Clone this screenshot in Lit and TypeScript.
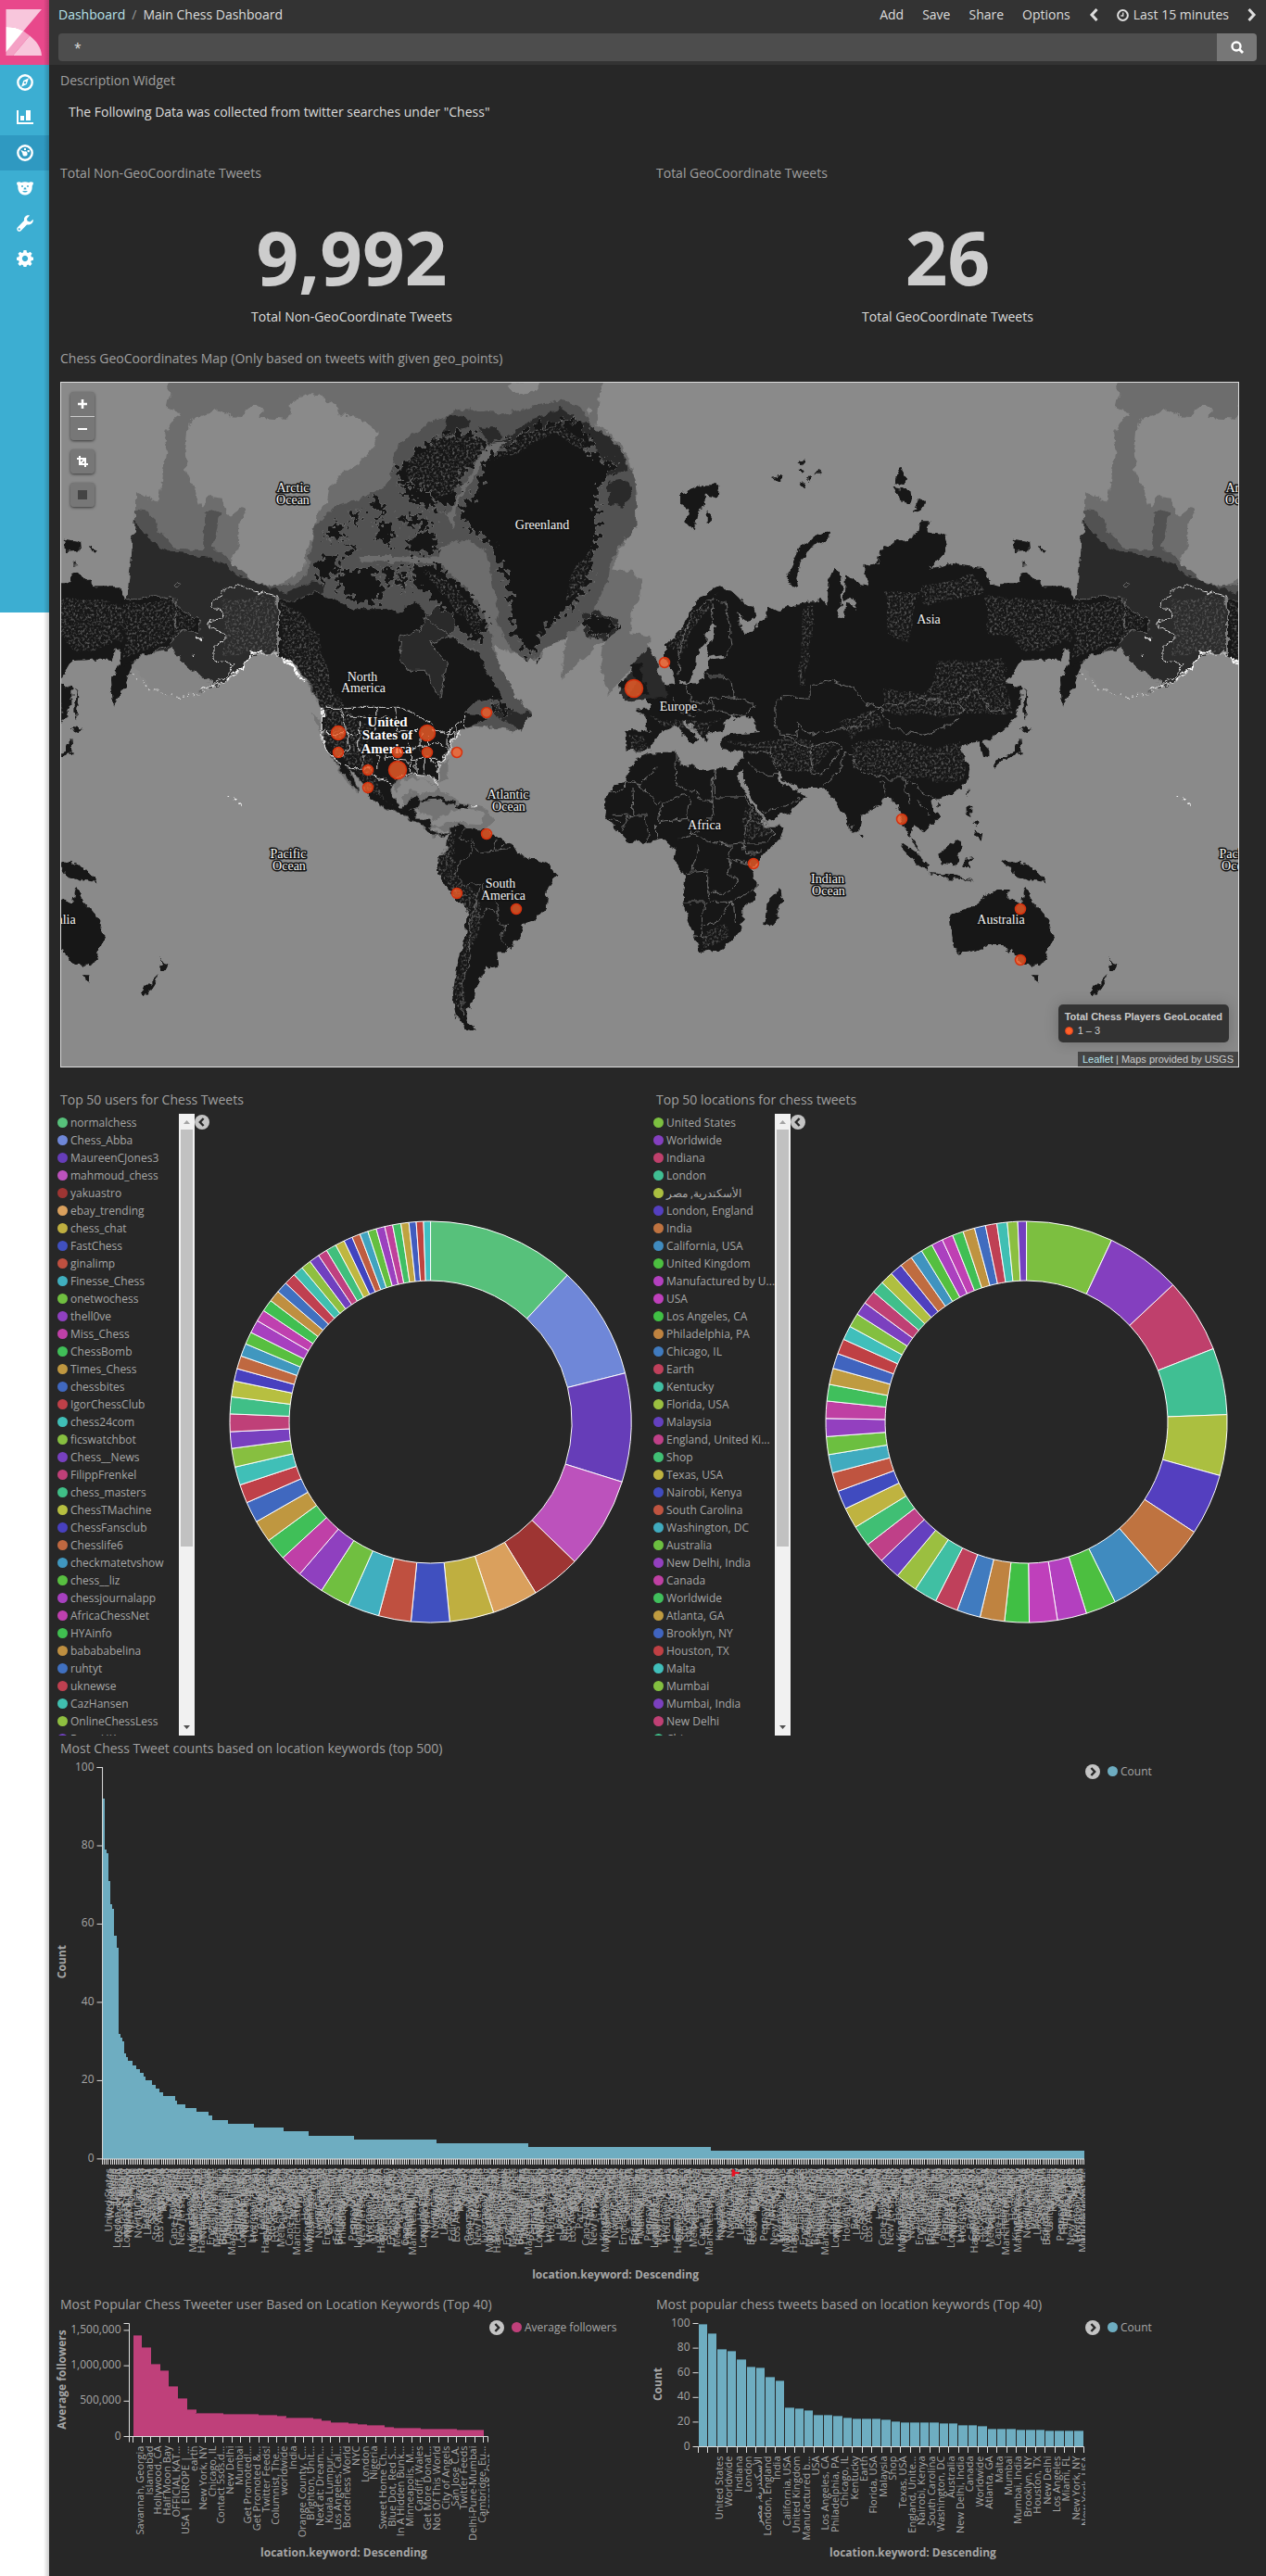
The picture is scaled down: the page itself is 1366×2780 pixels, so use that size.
import { LitElement, html, svg, css } from "lit";
import { customElement, property } from "lit/decorators.js";

/* ---------- data ---------- */

const USERS = ["normalchess", "Chess_Abba", "MaureenCJones3", "mahmoud_chess", "yakuastro", "ebay_trending", "chess_chat", "FastChess", "ginalimp", "Finesse_Chess", "onetwochess", "thell0ve", "Miss_Chess", "ChessBomb", "Times_Chess", "chessbites", "IgorChessClub", "chess24com", "ficswatchbot", "Chess__News", "FilippFrenkel", "chess_masters", "ChessTMachine", "ChessFansclub", "Chesslife6", "checkmatetvshow", "chess__liz", "chessjournalapp", "AfricaChessNet", "HYAinfo", "babababelina", "ruhtyt", "uknewse", "CazHansen", "OnlineChessLess", "RogerHK"];
const USER_COLORS = "57c17b 6f87d8 663db8 bc52bc 9e3533 daa05d bfaf40 4050bf bf5040 40afbf 70bf40 8f40bf bf40a7 40bf58 bf9740 4068bf bf4048 40bfb7 87bf40 7840bf bf4078 40bf87 b7bf40 4840bf bf6840 4097bf 58bf40 a740bf bf40af 40bf50 bf8f40 4070bf bf4050 40bfaf 8fbf40 7040bf bf4080 40bf7c bfb740 4044bf bf5c40 40a3bf 64bf40 9b40bf bf409b 40bf64 bfa340 405cbf bf4440 40bfc3".split(" ");
const USER_ENDS = [43, 75.9, 107.4, 134.1, 148.4, 161.7, 174.5, 185.6, 195, 204.1, 212.9, 220.7, 227.4, 233.8, 240.2, 246.3, 251.7, 257, 262.4, 267.2, 272.3, 277.2, 281.8, 285.4, 289.2, 292.9, 296.5, 300.3, 303.7, 307.2, 310.5, 313.8, 317.2, 320.2, 323.1, 326.1, 328.8, 331.8, 334.5, 337, 339.4, 341.8, 344.3, 346.8, 349.1, 351.5, 353.8, 355.9, 358, 360];

const PLACES = ["United States", "Worldwide", "Indiana", "London", "الأسكندرية, مصر", "London, England", "India", "California, USA", "United Kingdom", "Manufactured by U...", "USA", "Los Angeles, CA", "Philadelphia, PA", "Chicago, IL", "Earth", "Kentucky", "Florida, USA", "Malaysia", "England, United Ki...", "Shop", "Texas, USA", "Nairobi, Kenya", "South Carolina", "Washington, DC", "Australia", "New Delhi, India", "Canada", "Worldwide", "Atlanta, GA", "Brooklyn, NY", "Houston, TX", "Malta", "Mumbai", "Mumbai, India", "New Delhi", "China"];
const PLACE_COLORS = "7cbf40 843fbf bf406c 40bf93 abbf40 543fbf bf7340 408bbf 4cbf40 b340bf bf40bb 40bf44 bf8340 407bbf bf405b 40bfa3 9bbf40 6440bf bf4088 40bf74 bfb340 404bbf bf5440 40abbf 6cbf40 9340bf bf40a3 40bf5c bf9b40 4064bf bf4044 40bfbb 83bf40 7b40bf bf4074 40bf8b b0bf40 4f40bf bf6c40 4093bf 54bf40 ab40bf bf40b3 40bf54 bf9340 406cbf bf4054 40bfb3 8bbf40 7340bf".split(" ");
const PLACE_ENDS = [25.1, 46.9, 68.6, 87.9, 105.5, 123.3, 138.9, 153.8, 162.6, 171.1, 179.2, 186.3, 193.4, 200.2, 206.9, 213.6, 220, 226.3, 232.3, 238.4, 244.4, 249.8, 255.3, 260.6, 265.8, 271, 276, 280.8, 285.5, 289.9, 294.3, 298.4, 302.5, 306.4, 310.4, 314, 317.7, 321.3, 325, 328.5, 331.9, 335.2, 338.4, 341.6, 345, 348.2, 351.5, 354.5, 357.5, 360];

/* [count, number of locations with that count] */
const RUNS: [number, number][] = [[92, 1], [79, 1], [78, 1], [71, 1], [65, 1], [64, 1], [57, 1], [54, 1], [32, 1], [31, 1], [30, 1], [27, 1], [26, 1], [25, 2], [24, 2], [23, 2], [22, 2], [21, 1], [20, 3], [19, 2], [18, 2], [17, 2], [16, 6], [15, 1], [14, 4], [13, 6], [12, 6], [11, 2], [10, 8], [9, 13], [8, 15], [7, 13], [6, 23], [5, 42], [4, 47], [3, 93], [2, 190]];

const TOP40_TWEETS = [100, 92, 79, 78, 71, 65, 64, 57, 54, 32, 31, 30, 26, 26, 25, 24, 23, 23, 23, 22, 21, 20, 20, 20, 20, 19, 19, 18, 18, 17, 15, 15, 15, 14, 14, 14, 13, 13, 13, 13];
const TOP40_TWEET_LABELS = ["United States", "Worldwide", "Indiana", "London", "الأسكندرية, مصر", "London, England", "India", "California, USA", "United Kingdom", "Manufactured b...", "USA", "Los Angeles, CA", "Philadelphia, PA", "Chicago, IL", "Kentucky", "Earth", "Florida, USA", "Malaysia", "Shop", "Texas, USA", "England, Unite...", "Nairobi, Kenya", "South Carolina", "Washington, DC", "Australia", "New Delhi, India", "Canada", "Worldwide", "Atlanta, GA", "Malta", "Mumbai", "Mumbai, India", "Brooklyn, NY", "Houston, TX", "New Delhi", "Los Angeles", "Miami, FL", "New York, NY", "New York, USA"];

/* thousands of followers */
const TOP40_FOLLOWERS = [1435, 1257, 1030, 940, 709, 548, 380, 340, 330, 328, 327, 322, 320, 318, 314, 308, 300, 270, 264, 262, 250, 235, 208, 198, 190, 178, 170, 165, 134, 130, 122, 118, 114, 112, 110, 106, 100, 94, 92];
const TOP40_FOLLOWER_LABELS = ["Savannah, Georgia", "Islamabad", "Hollywood, CA", "Half Moon Bay", "OFFICIAL KAT...", "USA | EUROPE | ...", "earth", "New York, NY", "Chicago, IL", "Contact 5sos.d...", "New Delhi", "Mumbai", "Get Promoted!...", "Get Promoted &...", "Twitter Feeds!", "Columnist, The...", "worldwide", "India", "Orange County, C...", "Brighton, Unit...", "Next at: Dream...", "Kuala Lumpur,...", "Los Angeles, Cal...", "Borderless World", "NYC", "London", "Nigeria", "Sweet Home Ch...", "Blue Dot, Red S...", "In A Hidden Bunk...", "Minneapolis, M...", "Cardiff, Wales", "Get More Donat...", "Not Of This World", "City of Angels", "San Jose C.A.", "Twitter Feeds", "Delhi-Pune-Mumbai", "Cambridge, Eu...", "Toronto, Ont..."];

const CITIES = ["United States", "Worldwide", "Indiana", "London", "London, England", "Los Angeles, CA", "Manufactured b...", "Philadelphia, PA", "Kentucky", "Florida, USA", "England, Unite...", "Nairobi, Kenya", "Malaysia", "Washington, DC", "Mumbai, India", "Brooklyn, NY", "New Delhi", "Miami, FL", "New York, NY", "Reykjavik", "Russia", "Chennai, India", "Lagos, Nigeria", "New Jersey, USA", "Kuala Lumpur", "Toronto", "Canada", "Cambridge, MA", "Manchester, Eng...", "Stockholm", "Dublin", "Melbourne, Vic...", "Oslo", "Torquay", "Hamburg, Germ...", "Pakistan", "Seattle, WA", "Home", "Paris, France", "Virginia, USA", "Alberta", "Barcelona, Sp...", "Calgary", "India", "Liverpool, Eng...", "Madrid", "North Carolina", "Pennsylvania,...", "Santiago", "Berlin", "Edinburgh, Sc...", "Houston, Texas", "Los Santos", "Orlando, FL", "Rhode Island", "Stockton, Cali...", "Hong Kong", "Bangalore, Ind...", "Ghana", "Cape Town, So...", "Dallas, Texas", "Fairfax, Virgi...", "Green Bay", "Kingston, Jam..."];

/* ---------- shared ---------- */

const base = css`
  :host { display: block; font-family: "Open Sans", "Noto Sans", sans-serif; color: #a6a6a6; box-sizing: border-box; }
  *, *::before, *::after { box-sizing: border-box; }
  svg { display: block; }
`;

const toggleIcon = (dir: "left" | "right") => html`
  <svg width="16" height="16" viewBox="0 0 16 16" aria-hidden="true">
    <circle cx="8" cy="8" r="8" fill="#c4c4c4"></circle>
    <path d=${dir === "left" ? "M9.6 4 5.8 8l3.8 4" : "M6.4 4l3.8 4-3.8 4"} fill="none" stroke="#272727" stroke-width="2.4"></path>
  </svg>`;

/* ---------- donut ---------- */

@customElement("donut-chart")
export class DonutChart extends LitElement {
  @property({ attribute: false }) names: string[] = [];
  @property({ attribute: false }) colors: string[] = [];
  @property({ attribute: false }) ends: number[] = [];

  static styles = [base, css`
    :host { display: flex; height: 671px; margin-left: -5px; }
    .names { list-style: none; margin: 0; padding: 0 0 0 2px; width: 133px; overflow: hidden; }
    .name { display: flex; align-items: center; gap: 3px; height: 19px; font-size: 12px; line-height: 19px; white-space: nowrap; }
    .dot { flex: none; width: 11px; height: 11px; border-radius: 50%; }
    .bar { flex: none; width: 17px; background: #f1f1f1; display: flex; flex-direction: column; align-items: center; }
    .arrow { height: 17px; width: 17px; }
    .thumb { width: 13px; height: 450px; background: #c1c1c1; }
    .space { flex: 1; }
    .toggle { flex: none; align-self: flex-start; border: 0; padding: 0; margin: 1px 10px 0 0; background: none; }
    .plot { flex: 1; display: flex; align-items: center; justify-content: center; padding-bottom: 5px; min-width: 0; }
    .ring { width: 95%; max-width: 640px; max-height: 100%; }
  `];

  private slice(from: number, to: number) {
    const pt = (a: number, r: number) => {
      const t = (a * Math.PI) / 180;
      return `${(r * Math.sin(t)).toFixed(2)} ${(-r * Math.cos(t)).toFixed(2)}`;
    };
    return `M${pt(from, 218)}A218 218 0 0 1 ${pt(to, 218)}L${pt(to, 153.5)}A153.5 153.5 0 0 0 ${pt(from, 153.5)}Z`;
  }

  render() {
    return html`
      <ul class="names">
        ${this.names.map((n, i) => html`<li class="name"><span class="dot" style="background:#${this.colors[i]}"></span>${n}</li>`)}
      </ul>
      <div class="bar">
        <svg class="arrow" viewBox="0 0 17 17"><path d="M5 11l3.500-4 3.500 4z" fill="#a3a3a3"></path></svg>
        <div class="thumb"></div>
        <div class="space"></div>
        <svg class="arrow" viewBox="0 0 17 17"><path d="M5 6l3.500 4 3.500-4z" fill="#505050"></path></svg>
      </div>
      <button class="toggle" aria-label="Hide legend">${toggleIcon("left")}</button>
      <div class="plot">
        <svg class="ring" viewBox="-219 -219 438 438">
          ${this.ends.map((e, i) => svg`<path d=${this.slice(i ? this.ends[i - 1] : 0, e)} fill="#${this.colors[i]}" stroke="#fff" stroke-width="1"></path>`)}
        </svg>
      </div>`;
  }
}

/* ---------- bars ---------- */

interface BarSpec {
  width: number;
  height: number;
  left: number;
  right: number;
  top: number;
  bottom: number;
  max: number;
  ticks: [number, string][];
  color: string;
  edge: string;
  yTitle: string;
  yTitleY: number;
  xTitleX: number;
  xTitleY: number;
  first: number;
  pitch: number;
  barWidth: number;
  values: number[];
  labels: string[];
  labelStart: number;
  labelPitch: number;
  tickPitch: number;
  axis: boolean;
  legend: string;
  marker?: number;
}

@customElement("bar-chart")
export class BarChart extends LitElement {
  @property({ attribute: false }) spec!: BarSpec;

  static styles = [base, css`
    :host { display: flex; margin-left: -5px; align-items: flex-start; }
    .plot { flex: 1; min-width: 0; overflow: hidden; }
    .chart { width: 100%; height: auto; }
    .bars { shape-rendering: crispEdges; }
    .tick { font-size: 12px; fill: #a6a6a6; text-anchor: end; }
    .title { font-size: 12px; font-weight: 700; fill: #a6a6a6; text-anchor: middle; }
    .label { font-size: 11px; fill: #a6a6a6; text-anchor: end; }
    .legend { flex: none; width: 166px; display: flex; align-items: center; padding-top: 1px; font-size: 12px; line-height: 17px; }
    .toggle { border: 0; padding: 0; margin: 0 8px 0 0; background: none; }
    .dot { width: 11px; height: 11px; border-radius: 50%; margin-right: 3px; }
  `];

  render() {
    const s = this.spec;
    const y = (v: number) => s.bottom - ((s.bottom - s.top) * v) / s.max;
    const marks: number[] = [];
    for (let x = s.first; x <= s.right; x += s.tickPitch) marks.push(x);
    return html`
      <div class="plot">
        <svg class="chart" viewBox="0 0 ${s.width} ${s.height}">
          <g class="bars">
            ${s.values.map((v, i) => svg`<rect x=${s.first + i * s.pitch} y=${y(v)} width=${s.barWidth} height=${s.bottom - y(v)} fill=${s.color}></rect>`)}
            <path d=${s.values.map((v, i) => `M${s.first + i * s.pitch} ${y(v) + 0.5}h${s.barWidth}`).join("")} stroke=${s.edge} fill="none"></path>
          </g>
          ${s.ticks.map(([v, t]) => svg`
            <path d="M${s.left - 6} ${y(v)}H${s.left}" stroke="#ddd"></path>
            <text class="tick" x=${s.left - 9} y=${y(v) + 3}>${t}</text>`)}
          ${s.axis ? svg`<path d="M${s.left - 6} ${s.top}H${s.left}V${s.bottom}" stroke="#ddd" fill="none"></path>` : ""}
          <path d="M${s.left} ${s.bottom + 6}V${s.bottom}H${s.right}V${s.bottom + 6}" stroke="#ddd" fill="none"></path>
          <path class="bars" d=${marks.map((x) => `M${x} ${s.bottom}v6`).join("")} stroke="#ddd"></path>
          ${s.labels.map((t, i) => {
            const x = s.labelStart + i * s.labelPitch;
            return svg`<text class="label" direction="ltr" transform="translate(${x} ${s.bottom + 10}) rotate(-90)">${t}</text>`;
          })}
          ${s.marker ? svg`<path d="M${s.marker - 2} ${s.bottom + 11}a4 4 0 0 1 0 8zm4 3h4v2h-4z" fill="#e81123"></path>` : ""}
          <text class="title" transform="translate(11 ${s.yTitleY}) rotate(-90)">${s.yTitle}</text>
          <text class="title" x=${s.xTitleX} y=${s.xTitleY}>location.keyword: Descending</text>
        </svg>
      </div>
      <div class="legend">
        <button class="toggle" aria-label="Hide legend">${toggleIcon("right")}</button>
        <span class="dot" style="background:${s.color}"></span>${s.legend}
      </div>`;
  }
}

const COUNT_TICKS: [number, string][] = [0, 20, 40, 60, 80, 100].map((v) => [v, String(v)]);

const ALL_BARS: BarSpec = {
  width: 1110, height: 568, left: 50.5, right: 1108.5, top: 5.5, bottom: 427.5, max: 100,
  ticks: COUNT_TICKS, color: "#6eadc1", edge: "#6eadc1", yTitle: "Count", yTitleY: 215,
  xTitleX: 603.5, xTitleY: 557, first: 50.5, pitch: 2.116, barWidth: 2.3,
  values: RUNS.flatMap(([v, n]) => Array(n).fill(v)),
  labels: Array.from({ length: 498 }, (_, i) => (i < 6 ? CITIES[i] : CITIES[(i * 7 + (i >> 3) * 5) % CITIES.length])),
  labelStart: 61, labelPitch: 2.116, tickPitch: 2.116, axis: true, legend: "Count", marker: 731,
};

const FOLLOWER_BARS: BarSpec = {
  width: 468, height: 268, left: 79.5, right: 466.5, top: 5.5, bottom: 127.5, max: 1597,
  ticks: [[0, "0"], [500, "500,000"], [1000, "1,000,000"], [1500, "1,500,000"]],
  color: "#bf407a", edge: "#84345a", yTitle: "Average followers", yTitleY: 66,
  xTitleX: 311, xTitleY: 257, first: 83.5, pitch: 9.7, barWidth: 9.8,
  values: TOP40_FOLLOWERS, labels: TOP40_FOLLOWER_LABELS, labelStart: 95, labelPitch: 9.7,
  tickPitch: 9.7, axis: true, legend: "Average followers",
};

const TWEET_BARS: BarSpec = {
  width: 468, height: 268, left: 50.5, right: 466.5, top: 5.5, bottom: 138.5, max: 100,
  ticks: COUNT_TICKS, color: "#6eadc1", edge: "#4f7a88", yTitle: "Count", yTitleY: 71,
  xTitleX: 282, xTitleY: 257, first: 50.5, pitch: 10.4, barWidth: 9.4,
  values: TOP40_TWEETS, labels: TOP40_TWEET_LABELS, labelStart: 77, labelPitch: 10.4,
  tickPitch: 10.4, axis: false, legend: "Count",
};

/* ---------- map ---------- */

/* Each hemisphere has its own drawing grid, which these matrices bring to map units. */
const WEST = "matrix(.42091 0 0 .33333 -16 -13)";
const EAST = "matrix(.42474 0 0 .33333 634 -13)";

const SHALLOW = "M310 37 315 80 308 120 345 140 320 165 300 225 310 260 300 330 288 425 255 410 228 395V600L470 660 700 720 1150 940 1200 1060 1240 1115 1215 1165 1180 1120 1150 890 1220 930 1260 940 1290 880 1335 850 1320 1000 1380 930 1430 870 1420 960 1440 1050 1500 960 1545 890 1545 860 1500 850 1500 780 1520 740 1525 680 1500 650 1455 650 1460 600 1510 500 1515 400 1500 300 1470 240 1440 200 1410 180 1415 90 1440 0H310Z";
const BASIN = "M360 180 390 150 450 125 480 160 530 110 555 120 550 150 620 155 625 110 670 70 715 90 745 110 750 145 800 150 850 200 840 240 800 300 750 340 725 380 720 420 690 470 685 520 665 590 660 640 620 680 580 695 530 680 470 620 490 580 495 500 512 450 500 445 470 470 450 410 420 405 395 450 380 380 360 330 355 250ZM1185 50 1210 80 1260 60 1265 37H1190ZM1390 115 1400 130 1392 150 1385 130Z";
const SLOPE = "M228 450 265 460 290 520 330 575 400 580 410 470 405 460 430 452 445 460 435 510 425 575 450 590 490 640 540 680 580 700 640 690 668 660 680 560 690 500 740 440 800 420 870 370 890 310 900 240 960 190 1000 160 1060 125 1120 130 1180 140 1250 115 1320 95 1370 120 1400 190 1440 210 1480 270 1510 350 1515 500 1450 600 1440 680 1400 790 1330 860 1270 910 1235 945 1190 900 1150 800 1140 900 1200 1050 1245 1110 1200 1165 1090 1150 600 760 228 700Z";
const DEEP = "M228 485 245 520 290 570 330 590 400 600 450 620 490 665 570 700 610 722 680 685 710 690 700 800 500 950 440 1020 400 1040 330 1000 230 930 205 755ZM1100 260 1180 220 1250 155 1320 120 1390 180 1440 210 1480 270 1495 330 1440 340 1400 220ZM1030 150 1060 145 1090 160 1075 190 1040 200 1015 230ZM1105 180 1150 185 1168 210 1140 240ZM1375 790 1410 775 1460 800 1465 840 1430 870 1385 860ZM1440 360 1490 350 1500 400 1480 440 1440 430ZM1470 1045 1500 960 1545 890 1595 1052 1490 1070ZM1150 1075 1200 1105 1245 1110 1215 1160 1150 1120Z";
const BERING = "M220 950 240 925 275 912 320 900 350 945 390 985 425 1010 420 1035 330 1055 270 1035Z";
const BAFFIN_BAY = "M1010 570 1070 545 1130 590 1145 700 1160 790 1145 860 1120 790 1090 720 1040 660 1000 610ZM800 600 900 600 1010 605 1000 625 880 620 800 615ZM1130 240 1180 230 1120 300 1050 440 1045 520 1028 470 1060 390Z";

const CHUKOTKA = "M195 755 210 735 240 740 265 725 320 740 345 770 395 810 390 845 345 835 325 880 270 915 220 940 195 960Z";
const ALASKA = "M490 692 530 710 594 730V915L560 915 530 920 505 955 480 990 440 1015 400 1035 440 1008 470 975 480 950 445 945 430 930 430 895 460 865 455 850 415 830 420 810 455 800 445 770 425 765 430 735 455 715Z";
const MAINLAND = "M592 730 625 750 650 735 690 715 720 735 760 750 790 770 870 770 905 785 925 760 945 745 965 770 1000 850 1050 870 1090 900 1115 920 1130 970 1160 1030 1170 1060 1100 1075 1072 1110 1110 1115 1140 1125 1100 1145 1060 1170 1040 1200 1030 1230 1005 1270 1005 1340 985 1310 940 1305 895 1325 888 1355 890 1390 915 1415 945 1378 957 1385 945 1430 950 1450 985 1455 985 1490 1010 1505 1035 1485 1020 1508 985 1505 960 1470 900 1430 850 1405 825 1375 805 1325 775 1280 803 1368 750 1290 735 1260 712 1210 705 1140 707 1095 670 1010 640 950 592 920Z";
const SOUTH_AMERICA = "M1035 1485 1060 1465 1075 1480 1130 1485 1150 1510 1190 1530 1205 1560 1235 1580 1290 1600 1310 1630 1285 1680 1280 1740 1250 1780 1220 1795 1215 1830 1180 1885 1155 1885 1160 1925 1125 1935 1120 1960 1105 1970 1100 2030 1080 2070 1080 2110 1105 2135 1075 2130 1050 2090 1040 2020 1055 1920 1075 1820 1078 1740 1040 1700 1000 1615 1005 1580 1025 1550 1030 1510Z";
const GREENLAND = "M1110 300 1150 270 1200 220 1250 180 1310 160 1360 165 1390 210 1400 240 1385 270 1420 280 1460 300 1440 340 1415 380 1410 470 1415 520 1400 600 1390 700 1350 760 1300 810 1270 850 1250 930 1225 905 1200 850 1190 780 1185 700 1160 620 1140 560 1100 530 1060 470 1065 440 1100 400 1115 340Z";
const ARCTIC_ISLES = "M925 290 960 250 1010 210 1060 200 1110 210 1130 240 1100 290 1060 350 1050 420 1020 440 990 400 940 370 895 350 905 310ZM900 365 940 375 985 400 1010 450 960 440 920 400ZM830 410 870 430 865 470 835 445ZM780 450 808 450 800 505 778 490ZM725 510 760 495 755 545 712 540ZM840 490 888 500 880 570 850 545ZM930 540 980 515 1010 570 985 592 928 590ZM755 560 800 565 790 595ZM900 470 950 470 990 490 980 510 920 500ZM700 600 755 605 750 655 700 685 690 640ZM745 665 790 640 840 640 850 680 870 705 850 755 790 745 755 715ZM860 630 893 640 893 690 870 685ZM900 640 925 645 918 710 900 700ZM940 620 1000 630 1040 670 1080 720 1110 770 1130 820 1115 880 1060 850 1040 790 990 740 960 710 938 680ZM1375 800 1400 795 1440 800 1460 825 1430 860 1395 850ZM1150 1075 1175 1080 1190 1110 1155 1105Z";
const CARIBBEAN = "M955 1385 1000 1378 1050 1402 1035 1406 1000 1388 960 1392ZM1055 1402 1090 1410 1085 1418 1055 1414ZM1495 955 1522 950 1530 1000 1545 1045 1492 1055 1515 1010ZM1475 1000 1495 1005 1490 1035 1468 1030Z";
const HUDSON = "M910 860 960 840 970 800 1010 760 1050 780 1050 830 1020 870 985 880 1025 950 1010 1060 985 1010 975 970 925 970 905 920Z";

const AFRICA = "M-34 1260-59 1325-103 1355-108 1400-113 1440-83 1485-49 1530 0 1525 30 1515 50 1530 70 1545 65 1580 85 1620 95 1650 85 1720 105 1790 130 1885 180 1875 215 1840 240 1790 238 1745 270 1715 272 1660 262 1610 300 1550 330 1510 343 1475 295 1475 270 1420 245 1370 222 1305 240 1290 240 1250 215 1290 175 1288 140 1297 110 1280 75 1270 70 1235 35 1235 0 1240-20 1250Z";
const EURASIA = "M0 1095 0 1060 20 1045 40 1020 65 1015 60 975 80 980 75 1010 100 1015 60 975 40 930 40 890 80 840 105 780 130 730 180 700 205 710 230 740 270 770 275 800 250 810 218 790 235 820 245 855 270 830 300 800 300 760 330 780 365 760 400 750 440 745 455 765 455 690 470 645 487 650 490 740 480 800 495 800 500 755 520 760 530 780 520 740 495 745 500 660 530 690 555 700 545 660 545 630 580 625 585 590 630 550 665 545 685 520 690 490 712 490 705 520 755 530 760 570 745 600 710 645 760 625 800 630 850 640 865 690 890 700 895 685 940 685 945 655 975 665 1005 700 1065 700 1085 750 1125 735 1125 920 1100 950 1085 1010 1050 1085 1045 1000 1070 930 1060 895 1045 935 1000 935 945 940 910 1015 945 1020 945 1080 920 1140 890 1175 850 1195 865 1230 865 1255 850 1250 840 1200 800 1210 795 1225 800 1255 815 1290 810 1330 780 1365 740 1385 720 1390 735 1450 700 1495 670 1470 665 1510 695 1560 680 1545 650 1480 635 1430 620 1380 600 1380 590 1400 540 1445 535 1490 522 1500 490 1420 470 1385 440 1350 380 1350 370 1375 330 1310 335 1330 375 1365 400 1378 360 1425 295 1460 285 1430 240 1340 240 1230 185 1225 180 1195 200 1180 285 1170 270 1145 265 1120 240 1120 220 1130 205 1110 190 1150 185 1170 150 1175 140 1200 125 1170 95 1130 90 1140 125 1200 110 1210 70 1150 40 1165 10 1190 6 1230-10 1232-55 1230-58 1160-5 1165-5 1120-30 1100Z";
const EAST_ISLES = "M333 1680 337 1720 318 1795 295 1795 300 1720ZM460 515 455 545 410 570 385 620 375 680 380 705 355 690 350 670 370 610 385 570 420 540ZM80 400 110 385 130 370 180 370 175 410 140 400 145 440 125 450 115 520 95 490 100 450 80 430ZM150 450 165 480 150 495ZM310 345 335 338 335 360ZM400 345 418 342 410 358ZM422 335 438 322 436 335ZM380 300 395 290 388 310ZM375 320 388 322 385 335ZM380 365 395 360 390 378ZM640 315 657 350 650 372 625 370ZM620 380 665 390 668 430 640 420ZM690 412 706 440 672 466ZM925 545 950 550 968 555 970 580 930 585ZM985 572 1010 580 1000 587ZM945 620 962 630 950 632ZM955 1030 962 1080 958 1140 952 1100ZM945 1155 975 1160 955 1175ZM945 1190 948 1240 905 1258 878 1290 880 1262 930 1235ZM812 1350 816 1362 810 1378ZM811 1410 820 1415 820 1450 812 1440ZM825 1490 846 1495 842 1520 830 1505ZM825 1460 840 1465 832 1480ZM735 1565 785 1518 797 1540 780 1600 740 1595ZM640 1525 680 1560 712 1600 708 1620 690 1610 655 1560ZM712 1625 760 1632 830 1650 760 1645ZM800 1580 825 1575 812 1592 822 1610 802 1612ZM890 1585 940 1590 980 1615 1010 1660 970 1650 930 1635 912 1605ZM538 1495 548 1500 545 1520ZM735 1400 742 1405 736 1412ZM765 1770 770 1760 830 1735 850 1705 885 1680 915 1680 912 1705 945 1725 955 1670 975 1720 1010 1770 1030 1830 1005 1910 985 1925 955 1925 935 1900 925 1875 915 1885 900 1860 860 1860 825 1880 785 1890 775 1870 768 1810ZM972 1957 995 1957 985 1985ZM1165 1895 1180 1920 1195 1925 1175 1948 1165 1930 1175 1920ZM1165 1955 1150 1990 1132 2022 1120 2015 1150 1975Z";
const BALTIC = "M165 820 145 850 145 880 120 920 118 960 100 1015 125 1010 150 975 150 935 195 925 190 915 145 925 150 890 172 830Z";

/* Mountain country, where the relief shows. */
const WEST_RELIEF = "M195 760 320 745 385 820 325 870 195 930ZM598 740 700 850 725 1000 760 1090 830 1150 840 1290 870 1400 960 1460 900 1420 830 1370 780 1280 715 1200 710 1100 610 915ZM1040 1480 1055 1560 1050 1640 1100 1700 1115 1780 1085 1900 1065 2100 1045 2050 1078 1820 1075 1740 1010 1620 1010 1570ZM930 280 1010 215 1120 215 1090 290 1050 400 1010 420 920 345ZM960 640 1040 690 1110 800 1100 860 1060 800ZM450 740 590 740 590 900 460 920ZM1190 230 1310 165 1390 220 1380 260 1300 200 1150 300ZM1360 620 1400 560 1385 700 1340 760Z";
const EAST_RELIEF = "M850 730 1000 740 1120 745 1115 900 1060 880 960 920 920 860 860 850ZM600 715 690 720 660 880 610 860ZM740 940 900 930 910 1010 920 1110 600 1110 595 1030 700 1050ZM510 1200 800 1210 800 1330 650 1320 520 1290ZM190 1190 340 1190 470 1210 430 1310 330 1290 280 1220ZM480 1130 570 1090 600 1150 510 1190ZM45 900 110 790 180 720 110 830 80 930ZM240 1420 290 1440 320 1490 250 1520ZM690 690 830 660 860 720 700 760ZM0 1120 70 1130 150 1140 190 1120 130 1180ZM-50 1170-8 1175 0 1220-50 1220ZM390 780 420 760 400 1020 385 1020ZM125 1820 200 1790 205 1840 135 1880Z";

const WEST_BORDERS = "M331 740V840M1075 1480 1060 1510 1085 1530 1090 1560 1060 1585 1050 1635 1075 1670 1115 1660 1125 1700 1155 1720 1160 1750 1125 1740 1120 1770 1090 1770 1110 1670M1155 1750 1160 1790 1180 1800 1165 1840 1185 1870M1085 1770 1085 1900 1065 1990 1068 2090M1085 1520 1110 1560 1145 1555 1150 1520M1150 1555 1190 1550M1170 1530V1555M1015 1570 1050 1590M955 1420 930 1420";
const EAST_BORDERS = "M75 985 85 870 110 790 155 740 195 745 205 850 210 900 195 925M160 760 165 820M320 1130 320 1075 345 1055 410 1060 410 1020 465 1005 520 1030 550 1075 585 1085 530 1150 400 1180 375 1135 380 1180 330 1180 320 1130M585 1085 650 1080 680 1060 780 1080 800 1100 770 1145 700 1180 620 1160 585 1085M780 1080 830 1030 870 1100 905 1105M340 1180 400 1220 470 1200 490 1220 440 1310 415 1310 410 1220M440 1345 480 1300 500 1230 540 1300 600 1320 650 1320 660 1400M590 1330 600 1375M245 1240 280 1230 310 1240 335 1310 290 1310 250 1260M290 1430 340 1415 385 1385M410 1060M100 1015 105 1070 150 1080 160 1060 215 1055 210 1010 190 990 150 990M160 1060 165 1100 240 1120 270 1080 215 1055M100 1100 165 1100M60 1060 75 1100 120 1120M-60 1325-30 1340 20 1290M68 1235 70 1340 160 1400 165 1290M168 1290V1380H245M30 1405 90 1370 105 1385 100 1450 25 1460 30 1405-40 1325M100 1450 105 1500 185 1535 240 1530 260 1430 245 1380M160 1400 165 1440 110 1500 75 1520M185 1535 210 1540 200 1630 230 1650 200 1690 150 1690 150 1620 95 1625M125 1540 110 1620M85 1722H145M140 1725 135 1830 110 1825M140 1800 180 1780 210 1720 265 1680M150 1690 155 1720 215 1720 220 1790M200 1580 260 1600M240 1530 245 1565 285 1560M280 1460 325 1500 300 1530 245 1530M-70 1490-50 1440-10 1440 0 1525M20 1470V1520M-100 1450-70 1460M655 1330 690 1360 720 1385M680 1390 715 1440M-60 1325V1350M-40 1350-38 1438H-90M-105 1360H-62M-10 1165 5 1170";
const STATES = "M718 1090H905L940 1110 985 1140 1000 1175 1030 1165 1045 1150 1062 1135M707 1175H800M752 1090 765 1150V1175M765 1120H840M843 1090V1180M843 1125H895M800 1140V1230M775 1175V1230L745 1250M800 1230H940M810 1230V1285M850 1230V1290M765 1275 800 1290 830 1290 845 1325 870 1320 888 1345M870 1230V1255L935 1265M935 1230V1300M948 1255V1300M970 1255V1300M985 1255 1000 1300M935 1255H1005M925 1170 935 1230 1005 1200 1035 1240M895 1090 900 1170 950 1165M1005 1175H1045V1210M960 1175V1225M980 1180V1215M1050 1150V1180M1070 1120 1075 1160M1030 1160 1028 1240M893 1320 930 1305 985 1310 1003 1350";

const LABELS_WEST: [string, number, number][] = [["Arctic", 250, 118], ["Ocean", 250, 131], ["Greenland", 519, 158], ["North", 325, 322], ["America", 326, 334], ["Atlantic", 482, 449], ["Ocean", 483, 462], ["Pacific", 245, 513], ["Ocean", 246, 526], ["South", 474, 545], ["America", 477, 558]];
const LABELS_EAST: [string, number, number][] = [["Europe", 666, 354], ["Asia", 936, 260], ["Africa", 694, 482], ["Indian", 827, 540], ["Ocean", 828, 553], ["Australia", 1014, 584]];
const COUNTRY_LABEL: [string, number, number][] = [["United", 352, 371], ["States of", 352, 385], ["America", 351, 400]];

const HITS: [number, number, number][] = [[618, 330, 10], [459, 356, 6], [299, 378, 8], [395, 378, 9], [651, 302, 6], [299, 399, 6], [331, 418, 6], [331, 437, 6], [363, 399, 6], [363, 418, 10], [395, 399, 6], [427, 399, 6], [459, 487, 6], [427, 551, 6], [491, 568, 6], [907, 471, 6], [747, 519, 6], [1035, 568, 6], [1035, 623, 6]];

@customElement("tweet-map")
export class TweetMap extends LitElement {
  static styles = [base, css`
    :host { position: relative; margin-top: 13px; height: 740px; border: 1px solid #ddd; overflow: hidden; background: #8a8a8a; }
    .world { width: 100%; height: 100%; }
    .thin path { vector-effect: non-scaling-stroke; }
    .name { font: 14px "Liberation Serif", serif; fill: #f2f2f2; stroke: #111; stroke-width: 3px; stroke-linejoin: round; paint-order: stroke; text-anchor: middle; }
    .country { font: bold 15px "Liberation Serif", serif; fill: #fff; stroke: #111; stroke-width: 3px; paint-order: stroke; text-anchor: middle; }
    .tools { position: absolute; left: 10px; top: 10px; display: flex; flex-direction: column; gap: 10px; }
    .group { border-radius: 4px; overflow: hidden; box-shadow: 0 1px 3px #0009; background: #777; display: flex; flex-direction: column; }
    .tool { width: 26px; height: 26px; padding: 0; border: 0; background: #777; display: flex; align-items: center; justify-content: center; }
    .tool + .tool { border-top: 1px solid #ccc; }
    .key { position: absolute; right: 10px; bottom: 26px; padding: 6px 7px; border-radius: 5px; background: #333; box-shadow: 0 0 15px #0003; color: #ccc; font: 12px/14px "Liberation Sans", Arial, sans-serif; }
    .key b { display: block; font-size: 11px; }
    .range { display: flex; align-items: center; gap: 5px; font-size: 11px; margin-top: 1px; }
    .spot { width: 9px; height: 9px; border-radius: 50%; background: #ff6128; border: 1px solid #d8401f; }
    .credit { position: absolute; right: 0; bottom: 0; padding: 0 5px; background: #333c; color: #ccc; font: 11px/16px "Liberation Sans", Arial, sans-serif; }
    .credit a { color: #b7e2ea; text-decoration: none; }
  `];

  private west() {
    return svg`
      <g id="west">
        <g filter="url(#rough)"><g transform=${WEST}>
          <path fill="#6d6d6d" d=${SHALLOW}></path>
          <path fill="#525252" d=${SLOPE}></path>
          <path fill="#8a8a8a" d=${BASIN}></path>
          <path fill="#2a2a2a" d=${DEEP}></path>
          <path fill="#858585" d=${BERING}></path>
          <path fill="#6d6d6d" d=${BAFFIN_BAY}></path>
          <path fill="#747474" d="M890 1330 930 1300 1005 1350 1060 1400 1130 1415 1148 1460 1130 1485 1040 1490 985 1480 990 1440 920 1415ZM1008 1270 1030 1260 1030 1320 1010 1340ZM700 1130 680 1100 715 1220 760 1320 800 1370 770 1260Z"></path>
          <path fill="#8a8a8a" d="M905 1330 960 1320 1000 1350 960 1375 930 1360 900 1395ZM1010 1440 1080 1415 1125 1430 1115 1465 1050 1460 1000 1475 985 1460Z"></path>
        </g></g>
        <g filter="url(#rough)"><g transform=${WEST} class="thin">
          <path fill="#171717" stroke="#5a5a5a" stroke-width="1" d=${MAINLAND}></path>
          <path fill="#171717" d="${CHUKOTKA}${SOUTH_AMERICA}${CARIBBEAN}"></path>
          <path fill="none" stroke="#6a6a6a" d="M205 740 240 740 265 725 320 740 345 770 395 810 390 845 345 835 325 880 270 915 220 940"></path>
          <path fill="#2c2c2c" stroke="#f0f0f0" stroke-width=".9" d=${ALASKA}></path>
          <path fill="#2a2a2a" stroke="#6a6a6a" d=${HUDSON}></path>
          <path fill="none" stroke="#6a6a6a" d="M965 800 1010 840 1060 880 1110 915M325 690 335 682 345 692 335 702Z"></path>
        </g></g>
        <g filter="url(#fjords)"><g transform=${WEST} class="thin">
          <path fill="#161616" stroke="#747474" stroke-width=".9" d="${GREENLAND}${ARCTIC_ISLES}"></path>
        </g></g>
        <g filter="url(#relief)"><g transform=${WEST}><path d=${WEST_RELIEF}></path></g></g>
        <g filter="url(#rough)"><g transform=${WEST} class="thin" fill="none">
          <path stroke="#7a7a7a" stroke-width=".8" d=${WEST_BORDERS}></path>
          <path stroke="#dcdcdc" stroke-width="1" d=${STATES}></path>
          <path stroke="#e8e8e8" stroke-width="1.200" d="M707 1095 705 1180 720 1230 750 1275M1062 1170 1040 1200 1030 1240 1005 1270 1005 1340"></path>
          <path stroke="#fff" stroke-width="1.800" stroke-dasharray="5 1" d="M605 925 625 945 645 980 660 1010M612 940 632 960 650 1000M505 965 525 915 550 910M460 1000 490 970 510 950"></path>
          <path stroke="#d8d8d8" stroke-width="1.100" stroke-dasharray="2 4" d="M220 985 270 1035 340 1055 400 1045 435 1020"></path>
          <path stroke="#f0f0f0" stroke-width="1.600" d="M385 862 400 872M378 920 380 924M465 1380 468 1382M480 1386 486 1390M493 1400 498 1406M1094 1412H1102"></path>
        </g></g>
        ${LABELS_WEST.map(([t, x, y]) => svg`<text class="name" x=${x} y=${y}>${t}</text>`)}
      </g>`;
  }

  private east() {
    return svg`
      <g id="east">
        <g filter="url(#rough)"><g transform=${EAST}>
          <path fill="#171717" d="${EURASIA}${AFRICA}${EAST_ISLES}"></path>
          <path fill="#8a8a8a" d=${BALTIC}></path>
          <path fill="none" stroke="#8a8a8a" stroke-width="10" d="M226 1310 262 1395 292 1460M328 1305 345 1335 378 1352"></path>
        </g></g>
        <g filter="url(#relief)"><g transform=${EAST}><path d=${EAST_RELIEF}></path></g></g>
        <g filter="url(#rough)"><g transform=${EAST} class="thin">
          <path fill="none" stroke="#7c7c7c" stroke-width=".9" d=${EAST_BORDERS}></path>
        </g></g>
        ${LABELS_EAST.map(([t, x, y]) => svg`<text class="name" x=${x} y=${y}>${t}</text>`)}
      </g>`;
  }

  render() {
    return html`
      <svg class="world" viewBox="0 0 1270 738" preserveAspectRatio="xMidYMid slice" role="img" aria-label="World map of tweets">
        <defs>
          <filter id="rough" color-interpolation-filters="sRGB">
            <feTurbulence type="fractalNoise" baseFrequency=".11" numOctaves="3" seed="4" result="w"></feTurbulence>
            <feDisplacementMap in="SourceGraphic" in2="w" scale="9" xChannelSelector="R" yChannelSelector="G"></feDisplacementMap>
          </filter>
          <filter id="fjords" color-interpolation-filters="sRGB">
            <feTurbulence type="fractalNoise" baseFrequency=".16" numOctaves="2" seed="7" result="w"></feTurbulence>
            <feDisplacementMap in="SourceGraphic" in2="w" scale="26" xChannelSelector="R" yChannelSelector="G"></feDisplacementMap>
          </filter>
          <filter id="relief" color-interpolation-filters="sRGB">
            <feTurbulence type="fractalNoise" baseFrequency=".03" numOctaves="2" seed="2" result="w"></feTurbulence>
            <feDisplacementMap in="SourceGraphic" in2="w" scale="16" xChannelSelector="R" yChannelSelector="G" result="area"></feDisplacementMap>
            <feTurbulence type="fractalNoise" baseFrequency=".4" numOctaves="2" seed="9" result="n"></feTurbulence>
            <feColorMatrix in="n" values="0 0 0 0 .36  0 0 0 0 .36  0 0 0 0 .36  3 0 0 0 -1.4" result="bumps"></feColorMatrix>
            <feComposite in="bumps" in2="area" operator="in"></feComposite>
          </filter>
        </defs>
        ${this.east()}
        <use href="#east" x="-1024"></use>
        ${this.west()}
        <use href="#west" x="1024"></use>
        ${COUNTRY_LABEL.map(([t, x, y]) => svg`<text class="country" x=${x} y=${y}>${t}</text>`)}
        ${HITS.map(([x, y, r]) => svg`<circle cx=${x} cy=${y} r=${r - 0.5} fill="#ff6128" fill-opacity=".75" stroke="#d6310e" stroke-width="1.500"></circle>`)}
      </svg>
      <div class="tools">
        <div class="group">
          <button class="tool" aria-label="Zoom in"><svg width="12" height="12" viewBox="0 0 12 12"><path d="M6 1v10M1 6h10" stroke="#fff" stroke-width="2.600"></path></svg></button>
          <button class="tool" aria-label="Zoom out"><svg width="12" height="12" viewBox="0 0 12 12"><path d="M1 6h10" stroke="#fff" stroke-width="2.200"></path></svg></button>
        </div>
        <div class="group"><button class="tool" aria-label="Crop"><svg width="14" height="14" viewBox="0 0 14 14"><path d="M4 1v9h9M1 4h9v9M4 10l6-6" fill="none" stroke="#fff" stroke-width="2"></path></svg></button></div>
        <div class="group"><button class="tool" aria-label="Draw rectangle"><svg width="10" height="10" viewBox="0 0 10 10"><path d="M0 0h10v10H0z" fill="#444"></path></svg></button></div>
      </div>
      <div class="key"><b>Total Chess Players GeoLocated</b><div class="range"><span class="spot"></span>1 – 3</div></div>
      <div class="credit"><a href="#leaflet">Leaflet</a> | Maps provided by USGS</div>`;
  }
}

/* ---------- sidebar icons ---------- */

const NAV: [string, unknown][] = [
  ["Discover", svg`<circle cx="9" cy="9" r="7.700" fill="none" stroke="#fff" stroke-width="2.400"></circle><path fill="#fff" fill-rule="evenodd" d="M13 4.200 10.700 11 5 13.800 7.300 7zM9 7.900a1.200 1.200 0 1 0 .01 0z"></path>`],
  ["Visualize", svg`<path fill="#fff" d="M0 1h2v13h16v2H0zM4 7h4v5H4zM10 1h5v11h-5z"></path>`],
  ["Dashboard", svg`<circle cx="9" cy="9" r="7.700" fill="none" stroke="#fff" stroke-width="2.400"></circle><path fill="#fff" d="M4.300 5.800 8.300 7.500a2.600 2.600 0 1 1-1.900 2.300zM8 4h2v2H8zM11.600 6h2.200v2.200h-2.200z"></path>`],
  ["Timelion", svg`<path fill="#fff" fill-rule="evenodd" d="M0 3c2-1.300 3.500-1 5 0 2.500-.9 5.500-.9 8 0 1.500-1 3-1.300 5 0-.2 2-.6 3-1.300 3.600.3 5-1.700 9.900-7.700 9.900S1 11.600 1.300 6.600C.6 6 .2 5 0 3zm5 3.200v1.600h2V6.200zm6 0v1.600h2V6.200zM8 8.500l-.5 2h3l-.5-2zM6.200 12c1 2 4.600 2 5.600 0z"></path>`],
  ["Dev Tools", svg`<path fill="#fff" fill-rule="evenodd" d="M17.700 4.800 14.500 7.500 11.500 6.600 11 4 14 .5C11 -.3 7.500 2 8 6L.8 13.600C-1 16 2 19.200 4.400 17.200L11 10.500c4 .6 7.500-2 6.700-5.700zM2.800 14.300a1 1 0 1 1-.1 0z"></path>`],
  ["Management", svg`<path fill="#fff" fill-rule="evenodd" d="M7.500 0h3l.5 2.400 1.500.6 2-1.300 2.100 2.100-1.300 2 .6 1.500 2.100.5v3l-2.200.5-.6 1.500 1.300 2-2.100 2.100-2-1.300-1.500.6-.4 1.800h-3l-.5-1.800-1.500-.6-2 1.300-2.100-2.100 1.300-2-.6-1.500L0 10.800v-3l2.200-.5.6-1.500-1.300-2 2.100-2.100 2 1.300L7 2.400zM9 5.800a3.200 3.200 0 1 0 .01 0z"></path>`],
];

/* ---------- page ---------- */

@customElement("app-root")
export class AppRoot extends LitElement {
  static styles = [base, css`
    :host { display: flex; align-items: flex-start; background: #fff; font-size: 14px; line-height: 20px; }
    .side { flex: none; width: 53px; background: linear-gradient(to right, #0000 47px, #0003) #3caed2; height: 661px; }
    .rail { flex: none; align-self: stretch; width: 53px; background: linear-gradient(to right, #fff 47px, #ccc); }
    .logo { display: block; height: 70px; background: linear-gradient(to right, #0000 47px, #0003) #e8488b; }
    .nav { display: flex; align-items: center; justify-content: center; height: 38px; }
    .nav.on { background: linear-gradient(to right, #0000 47px, #0003) #2f99c1; }
    .main { flex: 1; min-width: 0; background: #272727; }
    .head { background: #333; height: 70px; padding: 0 10px; }
    .bar { display: flex; align-items: center; height: 36px; padding-bottom: 4px; color: #ddd; white-space: nowrap; }
    .crumb { color: #b7e2ea; text-decoration: none; }
    .slash { color: #999; padding: 0 7px; }
    .menu { margin-left: auto; display: flex; align-items: center; gap: 20px; }
    .link { border: 0; padding: 0; background: none; color: inherit; font: inherit; display: flex; align-items: center; gap: 5px; }
    .find { display: flex; height: 30px; border-radius: 4px; overflow: hidden; }
    .query { flex: 1; min-width: 0; border: 0; background: #4d4d4d; color: #ddd; padding: 0 17px; font: 14px "Open Sans", sans-serif; }
    .go { width: 43px; border: 0; padding: 0; background: #777; display: flex; align-items: center; justify-content: center; }
    .grid { display: grid; grid-template-columns: minmax(0, 1fr) minmax(0, 1fr); column-gap: 14px; grid-template-rows: 100px 200px 800px 700px 600px 300px; padding: 5px 29px 5px 12px; }
    .wide { grid-column: 1 / -1; }
    .title { margin: 0; font-size: 14px; font-weight: 400; line-height: 24px; color: #a0a0a0; }
    .note { margin: 12px 9px 0; color: #ddd; }
    .body { margin-top: 3px; }
    .metric { text-align: center; color: #cdcdcd; }
    .value { font-size: 80px; line-height: 110px; font-weight: 700; margin-top: 23px; }
    .caption { color: #ddd; }
  `];

  private metric(title: string, value: string) {
    return html`<section><h2 class="title">${title}</h2>
      <div class="metric"><div class="value">${value}</div><div class="caption">${title}</div></div></section>`;
  }

  private chevron(d: string, label: string) {
    return html`<button class="link" aria-label=${label}><svg width="10" height="14" viewBox="0 0 10 14"><path d=${d} fill="none" stroke="#ddd" stroke-width="3"></path></svg></button>`;
  }

  render() {
    return html`
      <div class="rail">
        <nav class="side">
          <a class="logo" href="#home" aria-label="Home">
            <svg width="53" height="70" viewBox="0 0 53 70">
              <path fill="#f8c6dc" d="M6.500 10H45L25.300 33.500C20 30.400 13 29 6.500 29zM32 38.500C39 44 44.500 51 45 60H14z"></path>
              <path fill="#f4a1c5" d="M25.300 33.500 32 38.500 14 60H6.500V55z"></path>
              <path fill="#fff" d="M6.500 29c7 0 13.500 1.400 18.800 4.500L6.500 56z"></path>
            </svg>
          </a>
          ${NAV.map(([n, icon]) => html`<a class="nav ${n === "Dashboard" ? "on" : ""}" href="#${n}" aria-label=${n}><svg width="18" height="18" viewBox="0 0 18 18">${icon}</svg></a>`)}
        </nav>
      </div>
      <main class="main">
        <header class="head">
          <div class="bar">
            <a class="crumb" href="#dashboards">Dashboard</a><span class="slash">/</span><span>Main Chess Dashboard</span>
            <div class="menu">
              <button class="link">Add</button><button class="link">Save</button><button class="link">Share</button><button class="link">Options</button>
              ${this.chevron("M8.500 1 3 7l5.500 6", "Earlier")}
              <button class="link"><svg width="13" height="13" viewBox="0 0 13 13"><circle cx="6.500" cy="6.500" r="5.400" fill="none" stroke="#ddd" stroke-width="2"></circle><path d="M6.800 3.500V7H4.300" fill="none" stroke="#ddd" stroke-width="1.300"></path></svg>Last 15 minutes</button>
              ${this.chevron("M1.500 1 7 7l-5.500 6", "Later")}
            </div>
          </div>
          <div class="find">
            <input class="query" aria-label="Search" value="*" />
            <button class="go" aria-label="Run search"><svg width="14" height="14" viewBox="0 0 14 14"><circle cx="6" cy="6" r="4.500" fill="none" stroke="#fff" stroke-width="2.400"></circle><path d="M9 9l4 4" stroke="#fff" stroke-width="2.800"></path></svg></button>
          </div>
        </header>
        <div class="grid">
          <section class="wide"><h2 class="title">Description Widget</h2><p class="note">The Following Data was collected from twitter searches under "Chess"</p></section>
          ${this.metric("Total Non-GeoCoordinate Tweets", "9,992")}
          ${this.metric("Total GeoCoordinate Tweets", "26")}
          <section class="wide"><h2 class="title">Chess GeoCoordinates Map (Only based on tweets with given geo_points)</h2><tweet-map></tweet-map></section>
          <section><h2 class="title">Top 50 users for Chess Tweets</h2><donut-chart class="body" .names=${USERS} .colors=${USER_COLORS} .ends=${USER_ENDS}></donut-chart></section>
          <section><h2 class="title">Top 50 locations for chess tweets</h2><donut-chart class="body" .names=${PLACES} .colors=${PLACE_COLORS} .ends=${PLACE_ENDS}></donut-chart></section>
          <section class="wide"><h2 class="title">Most Chess Tweet counts based on location keywords (top 500)</h2><bar-chart class="body" .spec=${ALL_BARS}></bar-chart></section>
          <section><h2 class="title">Most Popular Chess Tweeter user Based on Location Keywords (Top 40)</h2><bar-chart class="body" .spec=${FOLLOWER_BARS}></bar-chart></section>
          <section><h2 class="title">Most popular chess tweets based on location keywords (Top 40)</h2><bar-chart class="body" .spec=${TWEET_BARS}></bar-chart></section>
        </div>
      </main>`;
  }
}
